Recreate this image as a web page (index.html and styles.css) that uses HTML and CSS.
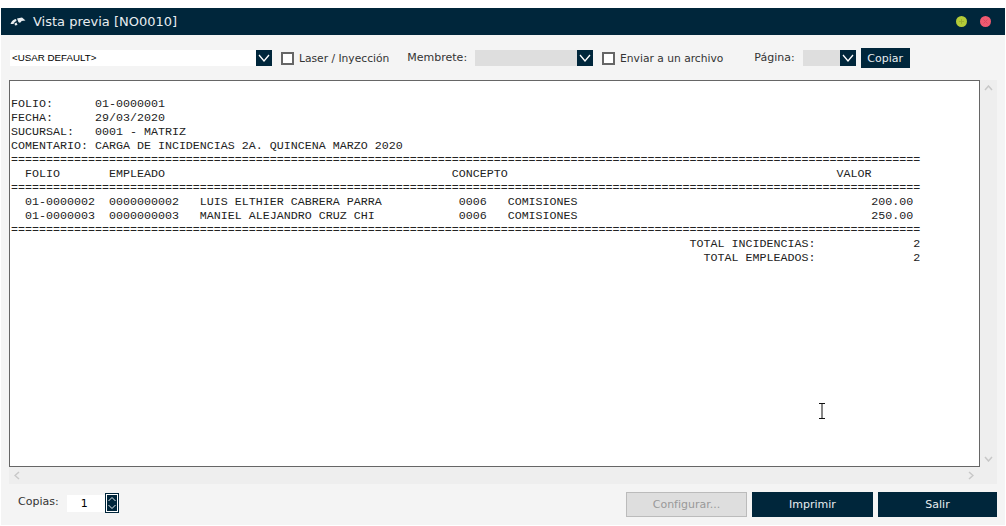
FILE: index.html
```html
<!DOCTYPE html>
<html lang="es">
<head>
<meta charset="utf-8">
<title>Vista previa [NO0010]</title>
<link rel="stylesheet" href="styles.css">
</head>
<body>
<div class="window">
  <header class="titlebar">
    <svg class="app-icon" width="16" height="9" viewBox="0 0 16 9"><path d="M0.500 7 C1.500 4 3.500 2.500 6 2 L6.500 4 C5 4.500 4 5.500 3.500 7 Z M4.500 6.500 L6.500 5.500 L7.500 8 L5 8.500 Z M7 1.500 L12 0.500 L15.500 3.500 L11.500 4 C11 6 8.500 6.500 8 4 Z" fill="#e8edf0"/></svg>
    <span class="title">Vista previa [NO0010]</span>
    <span class="win-btn min"><svg width="7" height="7" viewBox="0 0 7 7"><path d="M1 3.500 H6 M3.500 1 V6" stroke="#9db02f" stroke-width="1"/></svg></span>
    <span class="win-btn close"><svg width="7" height="7" viewBox="0 0 7 7"><path d="M1.500 1.500 L5.500 5.500 M5.500 1.500 L1.500 5.500" stroke="#d84a60" stroke-width="1"/></svg></span>
  </header>

  <div class="toolbar">
    <div class="select printer">
      <span class="select-value">&lt;USAR DEFAULT&gt;</span>
      <span class="select-arrow"><svg width="12" height="8" viewBox="0 0 12 8"><path d="M1 1 L6 7 L11 1" fill="none" stroke="#fff" stroke-width="1.300"/></svg></span>
    </div>
    <label class="check laser"><span class="box"></span>Laser / Inyección</label>
    <span class="label membrete">Membrete:</span>
    <div class="select disabled letterhead">
      <span class="select-value"></span>
      <span class="select-arrow"><svg width="12" height="8" viewBox="0 0 12 8"><path d="M1 1 L6 7 L11 1" fill="none" stroke="#fff" stroke-width="1.300"/></svg></span>
    </div>
    <label class="check file"><span class="box"></span>Enviar a un archivo</label>
    <span class="label pagina">Página:</span>
    <div class="select disabled page">
      <span class="select-value"></span>
      <span class="select-arrow"><svg width="12" height="8" viewBox="0 0 12 8"><path d="M1 1 L6 7 L11 1" fill="none" stroke="#fff" stroke-width="1.300"/></svg></span>
    </div>
    <button class="btn copy">Copiar</button>
  </div>

  <div class="viewer">
    <div class="viewer-row">
      <div class="report">
<pre class="report-text">FOLIO:      01-0000001
FECHA:      29/03/2020
SUCURSAL:   0001 - MATRIZ
COMENTARIO: CARGA DE INCIDENCIAS 2A. QUINCENA MARZO 2020
==================================================================================================================================
  FOLIO       EMPLEADO                                         CONCEPTO                                               VALOR
==================================================================================================================================
  01-0000002  0000000002   LUIS ELTHIER CABRERA PARRA           0006   COMISIONES                                          200.00
  01-0000003  0000000003   MANIEL ALEJANDRO CRUZ CHI            0006   COMISIONES                                          250.00
==================================================================================================================================
                                                                                                 TOTAL INCIDENCIAS:              2
                                                                                                   TOTAL EMPLEADOS:              2
</pre>
        <svg class="ibeam" width="8" height="16" viewBox="0 0 8 16"><path d="M1 .5 H7 M1 15.500 H7 M4 .5 V15.500" fill="none" stroke="#111" stroke-width="1"/></svg>
      </div>
      <div class="vscroll">
        <svg width="9" height="6" viewBox="0 0 9 6"><path d="M1 5 L4.500 1 L8 5" fill="none" stroke="#c8c8c8" stroke-width="1.500"/></svg>
        <svg width="9" height="6" viewBox="0 0 9 6"><path d="M1 1 L4.500 5 L8 1" fill="none" stroke="#c8c8c8" stroke-width="1.500"/></svg>
      </div>
    </div>
    <div class="hscroll">
      <svg width="6" height="9" viewBox="0 0 6 9"><path d="M5 1 L1 4.500 L5 8" fill="none" stroke="#c8c8c8" stroke-width="1.500"/></svg>
      <svg width="6" height="9" viewBox="0 0 6 9"><path d="M1 1 L5 4.500 L1 8" fill="none" stroke="#c8c8c8" stroke-width="1.500"/></svg>
    </div>
  </div>

  <footer class="footer">
    <span class="label copies-label">Copias:</span>
    <span class="copies-value">1</span>
    <span class="spinner">
      <svg width="10" height="16" viewBox="0 0 10 16"><path d="M1.500 6 L5 2.500 L8.500 6 M1.500 10 L5 13.500 L8.500 10" fill="none" stroke="#e8edf0" stroke-width="1"/></svg>
    </span>
    <span class="footer-gap"></span>
    <button class="btn action disabled-btn">Configurar...</button>
    <button class="btn action">Imprimir</button>
    <button class="btn action last">Salir</button>
  </footer>
</div>
</body>
</html>
```
FILE: styles.css
```css
* { box-sizing: border-box; }
html, body { margin: 0; padding: 0; background: #fff; }
body { width: 1006px; height: 526px; overflow: hidden; font-family: "DejaVu Sans", sans-serif; font-size: 11px; color: #222; }
.window { margin: 8px 0 0 1px; width: 1004px; height: 517px; background: #f4f4f4; display: flex; flex-direction: column; }
.titlebar { height: 27px; background: #00263b; color: #e8edf0; display: flex; align-items: center; padding-left: 9px; flex: none; }
.app-icon { margin-right: 7px; }
.title { font-size: 13px; flex: 1; }
.win-btn { width: 11px; height: 11px; border-radius: 50%; display: flex; align-items: center; justify-content: center; }
.win-btn.min { background: #b3cb38; margin-right: 13px; }
.win-btn.close { background: #ef5a70; margin-right: 14px; }
.toolbar { height: 45px; display: flex; align-items: center; padding: 1px 0 0 9px; flex: none; }
.select { height: 16px; display: flex; background: #fff; }
.select-value { flex: 1; font-family: "Liberation Sans", sans-serif; font-size: 9.750px; line-height: 16px; color: #000; padding-left: 2px; }
.select-arrow { width: 16px; background: #00263b; display: flex; align-items: center; justify-content: center; flex: none; }
.select.disabled { background: #dedede; }
.printer { width: 262px; }
.letterhead { width: 118px; margin-left: 8px; }
.page { width: 53px; margin-left: 8px; }
.check { display: flex; align-items: center; color: #333; font-size: 10.700px; }
.box { width: 13px; height: 13px; border: 2px solid #666; background: #fff; margin-right: 5px; flex: none; }
.laser { margin-left: 9px; }
.file { margin-left: 9px; }
.label { color: #333; position: relative; top: -1px; }
.membrete { margin-left: 18px; }
.pagina { margin-left: 31px; }
.btn { border: 0; background: #00263b; color: #e8edf0; font: inherit; padding: 0; }
.copy { width: 49px; height: 20px; margin-left: 5px; }
.viewer { flex: none; width: 988px; height: 404px; margin-left: 8px; background: #eee; display: flex; flex-direction: column; }
.viewer-row { display: flex; height: 387px; }
.report { position: relative; width: 971px; height: 387px; background: #fff; border: 1px solid #666; overflow: hidden; }
.report-text { margin: 0; padding: 16px 0 0 1px; font-family: "Liberation Mono", monospace; font-size: 11.667px; line-height: 14px; color: #222; }
.ibeam { position: absolute; left: 808px; top: 322px; }
.vscroll { width: 17px; display: flex; flex-direction: column; justify-content: space-between; align-items: center; padding: 5px 0; }
.hscroll { height: 17px; display: flex; justify-content: space-between; align-items: center; padding: 0 23px 0 5px; }
.footer { flex: 1; display: flex; align-items: center; padding: 1px 8px 1px 17px; }
.copies-label { margin-right: 8px; top: -3px; }
.copies-value { width: 38px; height: 17px; background: #fff; color: #000; font-size: 11px; line-height: 17px; padding-left: 14px; position: relative; top: -1px; }
.spinner { width: 14px; height: 20px; background: #00263b; border: 1px solid #00263b; box-shadow: inset 0 0 0 1px #fff; display: flex; align-items: center; justify-content: center; position: relative; top: -2px; }
.footer-gap { flex: 1; }
.action { width: 121px; height: 25px; margin-left: 5px; }
.action.last { width: 119px; }
.disabled-btn { background: #dedede; border: 1px solid #bbb; color: #999; }
```
